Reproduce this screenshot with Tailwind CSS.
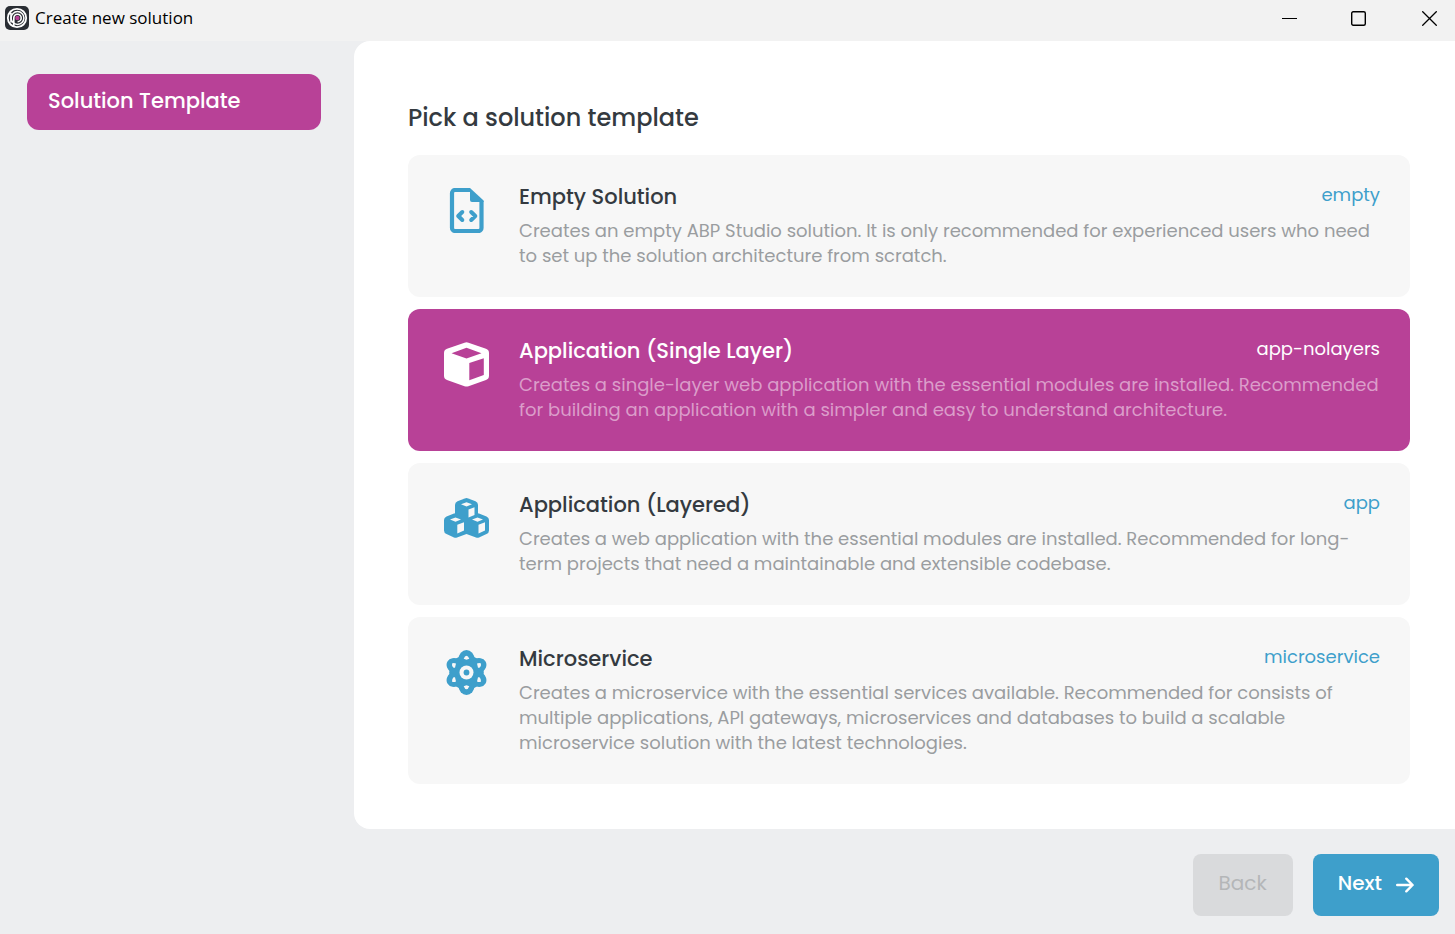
<!DOCTYPE html>
<html lang="en">
<head>
<meta charset="utf-8">
<title>Create new solution</title>
<script src="https://cdn.jsdelivr.net/npm/@tailwindcss/browser@4"></script>
</head>
<body class="flex min-h-screen flex-col bg-[#edeef0] font-['Poppins','Inter',sans-serif] text-[#343a40]">
  <header class="flex h-[41px] shrink-0 items-start justify-between bg-[#f2f2f2] text-black">
    <div class="flex items-center gap-[6px] pt-[6px] pl-[5px]">
      <svg class="size-6" viewBox="0 0 24 24" fill="none" aria-hidden="true">
        <rect width="24" height="24" rx="5" fill="#292d33"/>
        <circle cx="12" cy="12" r="9.2" stroke="#fff" stroke-width="1.8"/>
        <circle cx="12.5" cy="12" r="6.400" stroke="#fff" stroke-width="1.500"/>
        <path d="M8.800 20V12a3.700 3.700 0 1 1 3.800 3.700M4 7.500H6v9" stroke="#fff" stroke-width="1.600"/>
        <circle cx="12.400" cy="12" r="2.200" fill="#b83f95"/>
      </svg>
      <h1 class="font-['Segoe_UI','Open_Sans',sans-serif] text-[17px] leading-6">Create new solution</h1>
    </div>
    <div class="flex">
      <button type="button" aria-label="Minimize" class="flex h-[37px] w-[69px] items-center justify-center"><svg class="size-[15px]" viewBox="0 0 15 15" stroke="currentColor"><path d="M0 7.5h15"/></svg></button>
      <button type="button" aria-label="Maximize" class="flex h-[37px] w-[69px] items-center justify-center"><svg class="size-[15px]" viewBox="0 0 15 15" fill="none" stroke="currentColor" stroke-width="1.4"><rect x=".7" y=".7" width="13.6" height="13.6" rx="1.5"/></svg></button>
      <button type="button" aria-label="Close" class="flex h-[37px] w-[62px] items-center justify-center pl-[10px]"><svg class="size-[15px]" viewBox="0 0 15 15" stroke="currentColor" stroke-width="1.3"><path d="M.3.3l14.4 14.4M14.7.3L.3 14.7"/></svg></button>
    </div>
  </header>

  <div class="flex flex-1">
    <nav class="w-[354px] shrink-0 px-[27px] pt-[33px] pr-[33px]">
      <a href="#template" class="block rounded-xl bg-[#b84197] px-[21px] pt-[13px] pb-[15px] text-[21px] leading-7 font-medium text-white">Solution Template</a>
    </nav>

    <main id="template" class="flex-1 rounded-l-2xl bg-white pt-[61px] pr-[45px] pb-11 pl-[54px]">
      <fieldset>
        <legend class="mb-[21px] text-[24px] leading-8 font-medium">Pick a solution template</legend>
        <div class="flex flex-col gap-3">

          <label class="group flex cursor-pointer gap-[30px] rounded-xl bg-[#f7f7f7] pt-[27px] pr-[30px] pb-[29px] pl-9 has-checked:bg-[#b84197]">
            <input type="radio" name="template" value="empty" class="sr-only">
            <svg class="mt-[6px] size-[45px] shrink-0 text-[#3e9fcb]" viewBox="0 0 45 45" fill="none" aria-hidden="true">
              <path d="M26 2H11a3 3 0 0 0-3 3v35a3 3 0 0 0 3 3h23.500a3 3 0 0 0 3-3V13" stroke="currentColor" stroke-width="4.200"/>
              <path d="M26 0L39.600 12.500V14H28a2 2 0 0 1-2-2z" fill="currentColor"/>
              <path d="M18.300 24L14.200 28l4.100 4M27.200 24L31.300 28l-4.100 4" stroke="currentColor" stroke-width="4" stroke-linecap="round" stroke-linejoin="round"/>
            </svg>
            <span class="min-w-0 flex-1">
              <span class="flex items-start justify-between">
                <span class="text-[21px] leading-[30px] font-medium">Empty Solution</span>
                <span class="text-[18px] leading-[26px] text-[#3e9fcb]">empty</span>
              </span>
              <span class="mt-[6px] block text-[18px] leading-[25px] text-[#9a9da0]">Creates an empty ABP Studio solution. It is only recommended for experienced users who need to set up the solution architecture from scratch.</span>
            </span>
          </label>

          <label class="group flex cursor-pointer gap-[30px] rounded-xl bg-[#f7f7f7] pt-[27px] pr-[30px] pb-[29px] pl-9 has-checked:bg-[#b84197]">
            <input type="radio" name="template" value="app-nolayers" checked class="sr-only">
            <svg class="mt-[6px] size-[45px] shrink-0 text-white" viewBox="0 0 45 45" fill="currentColor" aria-hidden="true">
              <path fill-rule="evenodd" d="M20.500.7a6 6 0 0 1 4 0L42 6.800a4.500 4.500 0 0 1 3 4.200v22.800a4.500 4.500 0 0 1-3 4.200l-17.500 6.200a6 6 0 0 1-4 0L3 38a4.500 4.500 0 0 1-3-4.200V11a4.500 4.500 0 0 1 3-4.200zM22.500 5.700L7.500 11.200l15 5.300 15-5.300zM25.300 21v17.300l14.500-5.200V16.300z"/>
            </svg>
            <span class="min-w-0 flex-1">
              <span class="flex items-start justify-between text-white">
                <span class="text-[21px] leading-[30px] font-medium">Application (Single Layer)</span>
                <span class="text-[18px] leading-[26px]">app-nolayers</span>
              </span>
              <span class="mt-[6px] block text-[18px] leading-[25px] text-[#db9dca]">Creates a single-layer web application with the essential modules are installed. Recommended for building an application with a simpler and easy to understand architecture.</span>
            </span>
          </label>

          <label class="group flex cursor-pointer gap-[30px] rounded-xl bg-[#f7f7f7] pt-[27px] pr-[30px] pb-[29px] pl-9 has-checked:bg-[#b84197]">
            <input type="radio" name="template" value="app" class="sr-only">
            <svg class="mt-2 h-10 w-[45px] shrink-0 text-[#3e9fcb]" viewBox="0 0 45 40" aria-hidden="true">
              <g fill="currentColor">
                <path d="M20.800.4q1.700-.6 3.400 0l7.300 2.800q2.500 1 2.500 3.500V20H11V6.700q0-2.500 2.500-3.500z"/>
                <path d="M10 15.600q1.500-.5 3 0l9.500 2.400 9.500-2.400q1.500-.5 3 0l7.500 2.900q2.500 1 2.500 3.500v10.500q0 2.500-2.500 3.500L35 39.500q-1.500.5-3 0L22.500 36 13 39.500q-1.500.5-3 0L2.500 36Q0 35 0 32.500V22q0-2.500 2.500-3.500z"/>
              </g>
              <g fill="#f7f7f7">
                <path d="M17 6.300L22.500 4.300 28 6.300 22.500 8.500zM24.500 11.400l6-2.200v7.700l-6 2.600z"/>
                <path d="M6 21.600l5.500-2 5.500 2-5.500 2.200zM13.300 26.800l6.700-2.500v8.300l-6.700 3z"/>
                <path d="M28 21.600l5.500-2 5.500 2-5.500 2.200zM34.500 26.800l6.500-2.500v8.300l-6.500 3z"/>
              </g>
            </svg>
            <span class="min-w-0 flex-1">
              <span class="flex items-start justify-between">
                <span class="text-[21px] leading-[30px] font-medium">Application (Layered)</span>
                <span class="text-[18px] leading-[26px] text-[#3e9fcb]">app</span>
              </span>
              <span class="mt-[6px] block text-[18px] leading-[25px] text-[#9a9da0]">Creates a web application with the essential modules are installed. Recommended for long-term projects that need a maintainable and extensible codebase.</span>
            </span>
          </label>

          <label class="group flex cursor-pointer gap-[30px] rounded-xl bg-[#f7f7f7] pt-[27px] pr-[30px] pb-[29px] pl-9 has-checked:bg-[#b84197]">
            <input type="radio" name="template" value="microservice" class="sr-only">
            <svg class="mt-[6px] size-[45px] shrink-0 text-[#3e9fcb]" viewBox="0 0 45 45" aria-hidden="true">
              <g fill="currentColor">
                <circle cx="22.500" cy="22.500" r="17.300"/>
                <rect x="14.500" y="0" width="16" height="45" rx="8" ry="9"/>
                <rect x="15" y="0.500" width="15" height="44" rx="7.500" ry="9" transform="rotate(60 22.500 22.500)"/>
                <rect x="15" y="0.500" width="15" height="44" rx="7.500" ry="9" transform="rotate(120 22.500 22.500)"/>
              </g>
              <g fill="#f7f7f7">
                <circle cx="22.500" cy="22.500" r="7"/>
                <path d="M19.700 8.700q1.200-3 2.800-3t2.800 3l-2.800 1zM19.700 36.300q1.200 3 2.800 3t2.800-3l-2.800-1z"/>
                <path d="M8 13.500q1.500-1 4 0l-1 4.200H9.500Q7.500 15.500 8 13.500zM37 13.500q-1.500-1-4 0l1 4.200h1.500q2-2.200 1.500-4.200zM8 31.500q1.500 1 4 0l-1-4.200H9.500q-2 2.200-1.500 4.200zM37 31.500q-1.500 1-4 0l1-4.200h1.500q2 2.200 1.500 4.200z"/>
              </g>
              <circle cx="22.500" cy="22.500" r="2.900" fill="currentColor"/>
            </svg>
            <span class="min-w-0 flex-1">
              <span class="flex items-start justify-between">
                <span class="text-[21px] leading-[30px] font-medium">Microservice</span>
                <span class="text-[18px] leading-[26px] text-[#3e9fcb]">microservice</span>
              </span>
              <span class="mt-[6px] block text-[18px] leading-[25px] text-[#9a9da0]">Creates a microservice with the essential services available. Recommended for consists of multiple applications, API gateways, microservices and databases to build a scalable microservice solution with the latest technologies.</span>
            </span>
          </label>
        </div>
      </fieldset>
    </main>
  </div>

  <footer class="flex h-[105px] shrink-0 items-start justify-end gap-5 pt-[25px] pr-4 text-[20px] leading-7">
    <button type="button" disabled class="h-[62px] rounded-lg bg-[#d9dadc] px-[26px] pb-[5px] text-[#b4b6b8]">Back</button>
    <button type="button" class="flex h-[62px] items-center gap-[14px] rounded-lg bg-[#3e9fcb] px-[25px] pb-[5px] font-medium text-white">Next
      <svg class="mt-[5px] h-4 w-[18px]" viewBox="0 0 18 16" fill="none" stroke="currentColor" stroke-width="2.400" stroke-linecap="round" stroke-linejoin="round" aria-hidden="true"><path d="M1.200 8h15.300M10.300 1.700L16.600 8l-6.300 6.300"/></svg>
    </button>
  </footer>
</body>
</html>
